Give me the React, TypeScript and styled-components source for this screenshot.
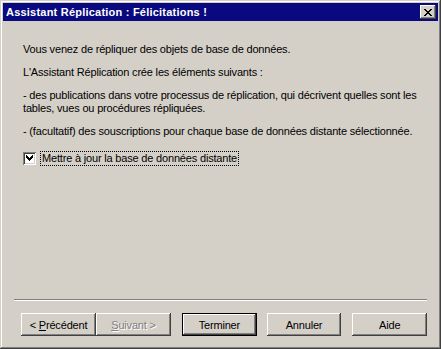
import { FC } from "react";
import styled, { createGlobalStyle, css } from "styled-components";

const FACE = "#d4d0c8";
const SHADOW = "#808080";
const DARK = "#404040";

const GlobalStyle = createGlobalStyle`
  html, body {
    margin: 0;
    padding: 0;
    background: ${FACE};
  }
  body {
    font-family: "Liberation Sans", Arial, sans-serif;
    font-size: 11px;
    -webkit-font-smoothing: none;
  }
`;

const Window = styled.div`
  width: 441px;
  height: 349px;
  box-sizing: border-box;
  padding: 3px;
  display: flex;
  flex-direction: column;
  background: ${FACE};
  box-shadow: inset -1px -1px 0 ${DARK}, inset 1px 1px 0 ${FACE},
    inset -2px -2px 0 ${SHADOW}, inset 2px 2px 0 #ffffff;
`;

const TitleBar = styled.div`
  height: 18px;
  flex: none;
  display: flex;
  align-items: center;
  justify-content: space-between;
  padding: 0 2px 0 3px;
  background: #0a0a80;
  color: #ffffff;
  font-weight: bold;
  font-size: 11px;
`;

const TitleText = styled.span`
  line-height: 18px;
  white-space: nowrap;
  letter-spacing: 0.22px;
`;

const CloseButton = styled.button`
  width: 16px;
  height: 14px;
  padding: 0;
  border: none;
  display: flex;
  align-items: center;
  justify-content: center;
  background: ${FACE};
  box-shadow: inset -1px -1px 0 ${DARK}, inset 1px 1px 0 #ffffff,
    inset -2px -2px 0 ${SHADOW};
`;

const Body = styled.div`
  flex: 1;
  display: flex;
  flex-direction: column;
  padding: 22px 20px 0 20px;
  color: #000000;
  letter-spacing: -0.18px;
`;

const Para = styled.p`
  margin: 0 0 10px 0;
  line-height: 13px;
  white-space: nowrap;
`;

const CheckRow = styled.label`
  display: flex;
  align-items: center;
  margin-top: 3px;
  gap: 4px;
`;

const CheckBox = styled.span`
  width: 13px;
  height: 13px;
  box-sizing: border-box;
  flex: none;
  display: flex;
  align-items: center;
  justify-content: center;
  background: #ffffff;
  box-shadow: inset 1px 1px 0 ${SHADOW}, inset -1px -1px 0 #ffffff,
    inset 2px 2px 0 ${DARK}, inset -2px -2px 0 ${FACE};
`;

const FocusLabel = styled.span`
  border: 1px dotted #000000;
  padding: 0 1px;
  line-height: 13px;
`;

const Footer = styled.div`
  flex: none;
  padding: 0 11px 10px 11px;
`;

const Separator = styled.div`
  height: 1px;
  border-top: 1px solid ${SHADOW};
  background: #ffffff;
  margin-bottom: 12px;
`;

const ButtonRow = styled.div`
  display: flex;
  padding-left: 7px;
`;

const ButtonGroup = styled.div`
  display: flex;
  margin-right: 11px;
`;

const Button = styled.button<{ $default?: boolean; $disabled?: boolean; $gap?: number }>`
  width: 75px;
  height: 23px;
  padding: 0;
  border: none;
  background: ${FACE};
  font-family: "Liberation Sans", Arial, sans-serif;
  font-size: 11px;
  letter-spacing: -0.18px;
  color: #000000;
  margin-right: ${(p) => p.$gap ?? 0}px;
  box-shadow: inset -1px -1px 0 ${DARK}, inset 1px 1px 0 #ffffff,
    inset -2px -2px 0 ${SHADOW}, inset 2px 2px 0 ${FACE};
  ${(p) =>
    p.$default &&
    css`
      box-shadow: inset 0 0 0 1px #000000, inset -2px -2px 0 ${DARK},
        inset 2px 2px 0 #ffffff, inset -3px -3px 0 ${SHADOW};
    `}
  ${(p) =>
    p.$disabled &&
    css`
      color: ${SHADOW};
      text-shadow: 1px 1px 0 #ffffff;
    `}

  u {
    text-decoration: underline;
  }
`;

const CloseGlyph: FC = () => (
  <svg width="8" height="7" viewBox="0 0 8 7" shapeRendering="crispEdges">
    <path
      d="M0 0h2v1h-2zM6 0h2v1h-2zM1 1h2v1h-2zM5 1h2v1h-2zM2 2h4v1h-4zM3 3h2v1h-2zM2 4h4v1h-4zM1 5h2v1h-2zM5 5h2v1h-2zM0 6h2v1h-2zM6 6h2v1h-2z"
      fill="#000"
    />
  </svg>
);

const CheckGlyph: FC = () => (
  <svg width="7" height="7" viewBox="0 0 7 7" shapeRendering="crispEdges">
    <path
      d="M6 0h1v3h-1zM5 1h1v3h-1zM4 2h1v3h-1zM3 3h1v3h-1zM2 2h1v3h-1zM1 1h1v3h-1zM0 0h1v3h-1z"
      fill="#000"
    />
  </svg>
);

export default function App() {
  return (
    <>
      <GlobalStyle />
      <Window>
        <TitleBar>
          <TitleText>Assistant Réplication : Félicitations !</TitleText>
          <CloseButton>
            <CloseGlyph />
          </CloseButton>
        </TitleBar>
        <Body>
          <Para>Vous venez de répliquer des objets de base de données.</Para>
          <Para>L'Assistant Réplication crée les éléments suivants :</Para>
          <Para>
            - des publications dans votre processus de réplication, qui décrivent quelles sont les
            <br />
            tables, vues ou procédures répliquées.
          </Para>
          <Para>- (facultatif) des souscriptions pour chaque base de données distante sélectionnée.</Para>
          <CheckRow>
            <CheckBox>
              <CheckGlyph />
            </CheckBox>
            <FocusLabel>Mettre à jour la base de données distante</FocusLabel>
          </CheckRow>
        </Body>
        <Footer>
          <Separator />
          <ButtonRow>
            <ButtonGroup>
              <Button>
                &lt; <u>P</u>récédent
              </Button>
              <Button $disabled>
                <u>S</u>uivant &gt;
              </Button>
            </ButtonGroup>
            <Button $default $gap={10}>Terminer</Button>
            <Button $gap={11}>Annuler</Button>
            <Button>Aide</Button>
          </ButtonRow>
        </Footer>
      </Window>
    </>
  );
}
